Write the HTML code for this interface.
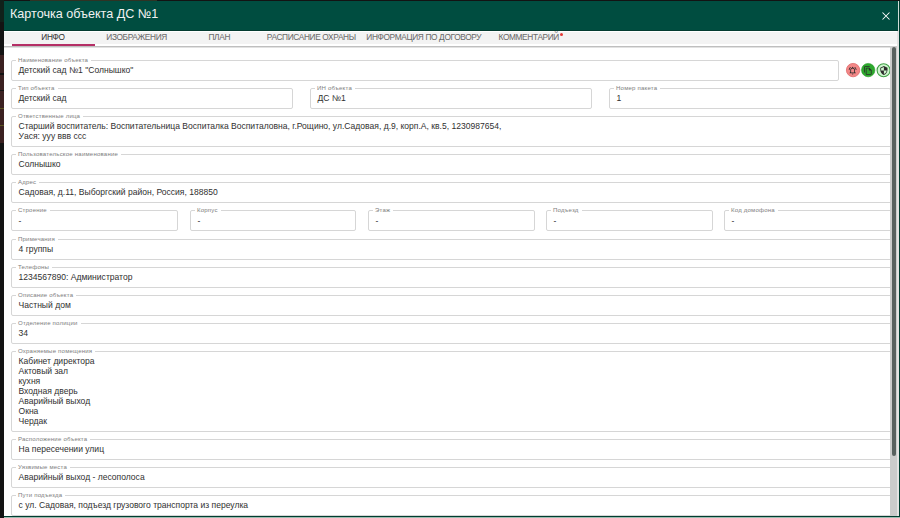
<!DOCTYPE html>
<html><head><meta charset="utf-8">
<style>
*{box-sizing:border-box;margin:0;padding:0}
html,body{width:900px;height:518px;overflow:hidden;background:#131313;font-family:"Liberation Sans",sans-serif;position:relative}
.abs{position:absolute}
#hdr{position:absolute;left:4px;top:1px;width:895px;height:30px;background:#004d40}
#title{position:absolute;left:6px;top:7px;font-size:12.6px;line-height:12.5px;color:#f1f1f1;white-space:nowrap}
#tabs{position:absolute;left:4px;top:31px;width:895px;height:15px;background:#f5f5f5;box-shadow:0 1px 1.5px rgba(0,0,0,.3)}
#content{position:absolute;left:4px;top:30px;width:895px;height:486px;background:#fff}
.tab{position:absolute;top:32.8px;font-size:8.3px;line-height:8.3px;letter-spacing:-0.35px;color:#6a6a6a;white-space:nowrap;-webkit-text-stroke:0.05px #6a6a6a}
.f{position:absolute;border:1px solid #d6d6d6;border-radius:2px}
.lbl{position:absolute;left:3.5px;top:-5px;font-size:6.05px;letter-spacing:0.2px;line-height:8px;color:#7e7e7e;background:#fff;padding:0 3px 0 2.5px;white-space:nowrap}
.val{position:absolute;left:6.5px;top:3.6px;font-size:8.55px;line-height:10px;color:#303030;white-space:nowrap}
</style></head><body>
<div class="abs" style="left:0;top:0;width:4px;height:22px;background:#10211a"></div>
<div class="abs" style="left:0;top:55px;width:4px;height:88px;background:#3b2121"></div>
<div class="abs" style="left:0;top:73px;width:4px;height:2px;background:#121212"></div>
<div class="abs" style="left:0;top:90px;width:4px;height:1px;background:#121212"></div>
<div class="abs" style="left:0;top:108px;width:4px;height:1px;background:#5a5420"></div>
<div class="abs" style="left:0;top:125px;width:4px;height:1px;background:#5a5420"></div>
<div class="abs" style="left:30px;top:0;width:127px;height:1px;background:#2f3324"></div>
<div id="content"></div>
<div id="hdr"><div id="title">Карточка объекта ДС №1</div>
 <svg class="abs" style="left:878px;top:11px" width="8" height="8" viewBox="0 0 8 8"><path d="M0.5 0.5L7.5 7.5M7.5 0.5L0.5 7.5" stroke="#fff" stroke-width="1.05"/></svg>
</div>
<div class="abs" style="left:4px;top:30px;width:894px;height:1px;background:#033b30"></div>
<div class="abs" style="left:4px;top:32px;width:894px;height:12px;background:#f3f3f3"></div>
<div class="abs" style="left:4px;top:46px;width:893px;height:1px;background:#bfbfbf"></div>
<div class="abs" style="left:4px;top:47px;width:893px;height:1px;background:#e2e2e2"></div>
<div class="abs" style="left:12px;top:44px;width:83px;height:2px;background:#b52f66"></div>
<div class="tab" style="left:41.3px;color:#333;-webkit-text-stroke-color:#333">ИНФО</div>
<div class="tab" style="left:106.3px">ИЗОБРАЖЕНИЯ</div>
<div class="tab" style="left:208.5px">ПЛАН</div>
<div class="tab" style="left:266.8px">РАСПИСАНИЕ ОХРАНЫ</div>
<div class="tab" style="left:366.3px">ИНФОРМАЦИЯ ПО ДОГОВОРУ</div>
<div class="tab" style="left:498.5px">КОММЕНТАРИЙ</div>
<div class="abs" style="left:559.5px;top:32.8px;width:3.5px;height:3.5px;border-radius:50%;background:#e53935"></div>
<div class="f" style="left:11px;top:60px;width:828px;height:21px"><span class="lbl">Наименование объекта</span><span class="val">Детский сад №1 "Солнышко"</span></div>
<div class="f" style="left:11px;top:88px;width:282px;height:21px"><span class="lbl">Тип объекта</span><span class="val">Детский сад</span></div>
<div class="f" style="left:310px;top:88px;width:282px;height:21px"><span class="lbl">ИН объекта</span><span class="val">ДС №1</span></div>
<div class="f" style="left:609px;top:88px;width:282px;height:21px"><span class="lbl">Номер пакета</span><span class="val">1</span></div>
<div class="f" style="left:11px;top:116px;width:881px;height:31px"><span class="lbl">Ответственные лица</span><span class="val">Старший воспитатель: Воспитательница Воспиталка Воспиталовна, г.Рощино, ул.Садовая, д.9, корп.А, кв.5, 1230987654,<br>Уася: ууу ввв ссс</span></div>
<div class="f" style="left:11px;top:154px;width:881px;height:21px"><span class="lbl">Пользовательское наименование</span><span class="val">Солнышко</span></div>
<div class="f" style="left:11px;top:182px;width:881px;height:21px"><span class="lbl">Адрес</span><span class="val">Садовая, д.11, Выборгский район, Россия, 188850</span></div>
<div class="f" style="left:11px;top:210px;width:167px;height:21px"><span class="lbl">Строение</span><span class="val" style="top:5.2px">-</span></div>
<div class="f" style="left:190px;top:210px;width:166px;height:21px"><span class="lbl">Корпус</span><span class="val" style="top:5.2px">-</span></div>
<div class="f" style="left:368px;top:210px;width:167px;height:21px"><span class="lbl">Этаж</span><span class="val" style="top:5.2px">-</span></div>
<div class="f" style="left:546px;top:210px;width:167px;height:21px"><span class="lbl">Подъезд</span><span class="val" style="top:5.2px">-</span></div>
<div class="f" style="left:724px;top:210px;width:168px;height:21px"><span class="lbl">Код домофона</span><span class="val" style="top:5.2px">-</span></div>
<div class="f" style="left:11px;top:239px;width:881px;height:21px"><span class="lbl">Примечания</span><span class="val">4 группы</span></div>
<div class="f" style="left:11px;top:267px;width:881px;height:21px"><span class="lbl">Телефоны</span><span class="val">1234567890: Администратор</span></div>
<div class="f" style="left:11px;top:295px;width:881px;height:21px"><span class="lbl">Описание объекта</span><span class="val">Частный дом</span></div>
<div class="f" style="left:11px;top:323px;width:881px;height:21px"><span class="lbl">Отделение полиции</span><span class="val">34</span></div>
<div class="f" style="left:11px;top:351px;width:881px;height:81px"><span class="lbl">Охраняемые помещения</span><span class="val">Кабинет директора<br>Актовый зал<br>кухня<br>Входная дверь<br>Аварийный выход<br>Окна<br>Чердак</span></div>
<div class="f" style="left:11px;top:439px;width:881px;height:21px"><span class="lbl">Расположение объекта</span><span class="val">На пересечении улиц</span></div>
<div class="f" style="left:11px;top:467px;width:881px;height:21px"><span class="lbl">Уязвимые места</span><span class="val">Аварийный выход - лесополоса</span></div>
<div class="f" style="left:11px;top:495px;width:881px;height:21px"><span class="lbl">Пути подъезда</span><span class="val">с ул. Садовая, подъезд грузового транспорта из переулка</span></div>

<svg class="abs" style="left:844px;top:62px" width="48" height="17" viewBox="0 0 48 17">
 <circle cx="9.1" cy="8.1" r="6.7" fill="#f28787" stroke="#e06a6a" stroke-width="0.8"/>
 <path transform="translate(3.97,3.87) scale(0.39)" fill="#2b2b2b" d="M12 22c1.1 0 2-.9 2-2h-4c0 1.1.9 2 2 2zm6-6v-5c0-3.07-1.64-5.64-4.5-6.32V4c0-.83-.67-1.5-1.5-1.5s-1.5.67-1.5 1.5v.68C7.63 5.36 6 7.92 6 11v5l-2 2v1h16v-1l-2-2zm-2 1H8v-6c0-2.48 1.51-4.5 4-4.5s4 2.02 4 4.5v6zM7.58 4.08L6.15 2.65C3.75 4.48 2.17 7.3 2.03 10.5h2c.15-2.65 1.51-4.97 3.55-6.42zm12.39 6.42h2c-.15-3.2-1.73-6.02-4.12-7.85l-1.42 1.43c2.02 1.45 3.39 3.77 3.54 6.42z"/>
 <circle cx="24.2" cy="8.1" r="6.7" fill="#2da82d" stroke="#239a23" stroke-width="0.6"/>
 <path transform="translate(19.43,3.82) scale(0.39)" fill="#2b2b2b" d="M16 1H4c-1.1 0-2 .9-2 2v14h2V3h12V1zm-1 4H8c-1.1 0-1.99.9-1.99 2L6 21c0 1.1.89 2 1.99 2H19c1.1 0 2-.9 2-2V11l-6-6zM8 21V7h6v5h5v9H8z"/>
 <circle cx="39.6" cy="8.2" r="6.5" fill="#cdf6cd" stroke="#40a046" stroke-width="1.1"/>
 <path transform="translate(35.1,3.7) scale(0.4)" fill="#2b2b2b" d="M12 1L3 5v6c0 5.55 3.84 10.74 9 12 5.16-1.26 9-6.45 9-12V5l-9-4zm0 10.99h7c-.53 4.12-3.28 7.79-7 8.94V12H5V6.3l7-3.11v8.8z"/>
</svg>
<div class="abs" style="left:890px;top:46px;width:7px;height:470px;background:#cbcbcb"></div>
<div class="abs" style="left:892px;top:47px;width:4px;height:409px;background:#59615f;border-radius:2px"></div>
<div class="abs" style="left:897px;top:31px;width:2px;height:485px;background:#e4e2e2"></div>
<div class="abs" style="left:898px;top:1px;width:1px;height:30px;background:#cfdcd6"></div>
<div class="abs" style="left:899px;top:1px;width:1px;height:516px;background:#003d30"></div>
<div class="abs" style="left:4px;top:516px;width:896px;height:1px;background:#003d30"></div>
<div class="abs" style="left:4px;top:517px;width:896px;height:1px;background:#9dbdb2"></div>
</body></html>
